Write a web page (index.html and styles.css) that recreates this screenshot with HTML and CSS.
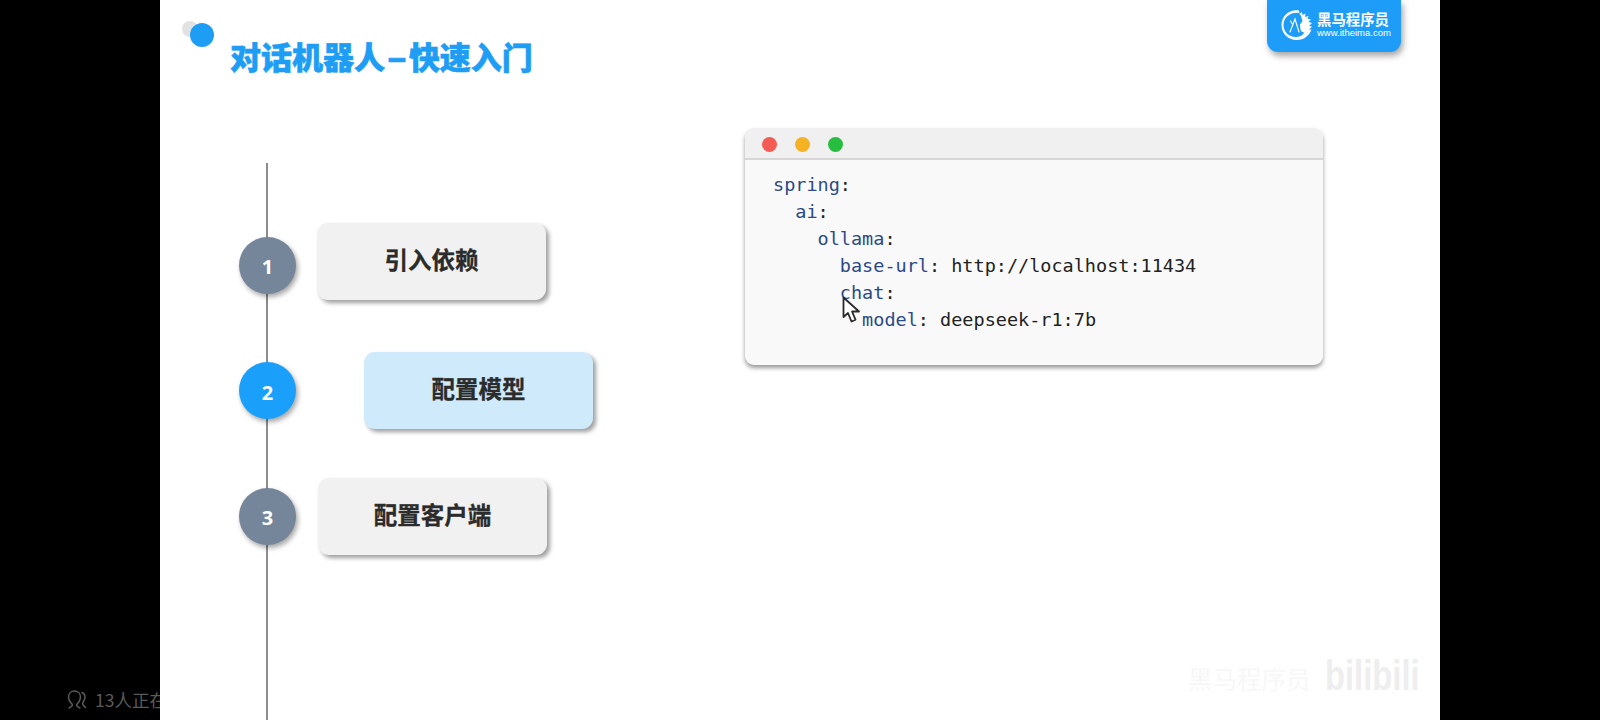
FILE: index.html
```html
<!DOCTYPE html>
<html lang="zh-CN">
<head>
<meta charset="utf-8">
<title>对话机器人-快速入门</title>
<link rel="stylesheet" href="styles.css">
</head>
<body>
<aside class="side side-left">
  <div class="viewers">
    <svg class="viewers-icon" width="22" height="20" viewBox="0 0 22 20" fill="none" stroke="#5a5a5a" stroke-width="1.500" stroke-linecap="round">
      <path d="M3 18c1.500-.8 3-1.500 3.500-3 0-1.200-4-3-4-8C2.500 3.500 5 1 8.500 1s6 2.500 6 6c0 5-4 6.800-4 8 .5 1.500 2 2.200 3.500 3"/>
      <path d="M16 2.500c2 .8 3 2.500 3 4.500 0 3-2 4.500-2.500 6.500 0 1.500 1.500 2.500 3 4"/>
    </svg>
    <span>13人正在看</span>
  </div>
</aside>
<main class="slide">
  <header class="slide-header">
    <svg class="mark" width="34" height="30" viewBox="0 0 34 30">
      <circle cx="8" cy="9" r="8" fill="#e2e2e2"/>
      <circle cx="20" cy="15" r="12" fill="#1e9df5"/>
    </svg>
    <h1 class="title">对话机器人<span class="dash">-</span>快速入门</h1>
  </header>

  <div class="logo">
    <svg class="logo-icon" width="34" height="32" viewBox="0 0 34 32" fill="none">
      <path d="M19 1.500C9 0 1.500 7 1.500 16c0 8.500 6.500 15 15 15 8 0 13-5 15-10.500l-2.500.5 3-3.500-3-.5 3-3-3.500-1 2.500-3-3.500 0 1-3-3.500 1 .5-3.500-3 1.500-.5-3-2.500 2z" fill="#fff"/>
      <path d="M19 4C11 3 3.500 8 3.500 16c0 7 5.500 12 12 12 4 0 7-1.500 9-4.500-2.500 0-3.500-1-4-3l-.5-5 2.500-3.500-1.500-5z" fill="#1e9df8"/>
      <path d="M10 23l5-13 4 13M13 16l-2.500-4" stroke="#fff" stroke-width="1.100" stroke-linecap="round"/>
    </svg>
    <div class="logo-text">
      <span class="logo-name">黑马程序员</span>
      <span class="logo-url">www.itheima.com</span>
    </div>
  </div>

  <div class="content">
    <section class="timeline">
      <div class="step">
        <span class="num">1</span>
        <div class="step-card step-card-first">引入依赖</div>
      </div>
      <div class="step step-active">
        <span class="num">2</span>
        <div class="step-card">配置模型</div>
      </div>
      <div class="step step-last">
        <span class="num">3</span>
        <div class="step-card">配置客户端</div>
      </div>
    </section>

    <section class="window">
      <div class="window-bar">
        <span class="light light-red"></span>
        <span class="light light-amber"></span>
        <span class="light light-green"></span>
      </div>
      <pre class="code"><span class="key">spring</span>:
  <span class="key">ai</span>:
    <span class="key">ollama</span>:
      <span class="key">base-url</span>: http://localhost:11434
      <span class="key">chat</span>:
        <span class="key">model</span>: deepseek-r1:7b</pre>
      <svg class="cursor" width="19" height="28" viewBox="0 0 19 28">
        <path d="M1.500 1.500V21l4.500-4 3.500 8.500 4-1.800L10 15.500h7z" fill="#fff" stroke="#2b2b2b" stroke-width="1.800" stroke-linejoin="round"/>
      </svg>
    </section>
  </div>

  <div class="watermark">
    <span class="wm-name">黑马程序员</span>
    <span class="wm-bili">bilibili</span>
  </div>
</main>
<aside class="side"></aside>
</body>
</html>
```

FILE: styles.css
```css
* { box-sizing: border-box; }

html, body { margin: 0; height: 720px; overflow: hidden; }

body {
  display: flex;
  background: #000;
  font-family: "Noto Sans CJK SC", "Noto Sans", sans-serif;
}

.side { width: 160px; flex: none; overflow: hidden; display: flex; flex-direction: column; justify-content: flex-end; }

.viewers {
  display: flex;
  align-items: center;
  gap: 7px;
  padding: 0 0 8px 66px;
  width: 220px;
  color: #5a5a5a;
  font-size: 17.500px;
  line-height: 24px;
  white-space: nowrap;
}

.viewers-icon { flex: none; }

.slide {
  position: relative;
  width: 1280px;
  height: 720px;
  flex: none;
  background: #fff;
  overflow: hidden;
}

.slide-header {
  display: flex;
  align-items: flex-start;
  height: 128px;
  padding: 20px 0 0 22px;
}

.mark { flex: none; }

.title {
  margin: 13px 0 0 14px;
  font-size: 31px;
  line-height: 46px;
  font-weight: 900;
  color: #1e9df5;
  -webkit-text-stroke: .6px #1e9df5;
  white-space: nowrap;
}

.dash {
  display: inline-block;
  margin: 0 6px;
  transform: scaleX(1.800);
}

.logo {
  position: absolute;
  top: 0;
  left: 1107px;
  width: 134px;
  height: 52px;
  display: flex;
  align-items: center;
  gap: 3px;
  padding: 0 0 2px 13px;
  background: #1e9df8;
  border-radius: 0 0 11px 11px;
  box-shadow: 2px 4px 6px rgba(0, 0, 0, .35);
  color: #fff;
}

.logo-icon { flex: none; }

.logo-text { display: flex; flex-direction: column; margin-top: -3px; }

.logo-name { font-size: 14.400px; line-height: 18px; font-weight: 700; white-space: nowrap; }

.logo-url { font-family: "Liberation Sans", sans-serif; font-size: 9.500px; line-height: 10px; white-space: nowrap; }

.content { display: flex; align-items: flex-start; }

.timeline {
  position: relative;
  flex: none;
  width: 506px;
  height: 557px;
  margin: 35px 0 0 79px;
  padding-top: 39.500px;
  display: grid;
  grid-auto-rows: 125.500px;
  align-content: start;
  justify-items: start;
}

.timeline::before {
  content: "";
  position: absolute;
  top: 0;
  bottom: 0;
  left: 27px;
  width: 2px;
  background: #8c8c8c;
}

.step { display: flex; align-items: center; gap: 21px; height: 100%; position: relative; }

.num {
  flex: none;
  width: 57px;
  height: 57px;
  padding-top: 3px;
  border-radius: 50%;
  display: flex;
  align-items: center;
  justify-content: center;
  background: #75859a;
  box-shadow: 2px 3px 5px rgba(0, 0, 0, .35);
  color: #fff;
  font-family: "Open Sans", sans-serif;
  font-size: 20px;
  font-weight: 700;
}

.step-card {
  width: 229px;
  height: 77px;
  padding-bottom: 5px;
  display: flex;
  align-items: center;
  justify-content: center;
  background: #f1f1f1;
  border-radius: 11px;
  box-shadow: 3px 3px 4px rgba(0, 0, 0, .38);
  color: #2b2b2b;
  font-size: 23.500px;
  font-weight: 700;
  -webkit-text-stroke: .3px #2b2b2b;
}

.step-card-first { margin-bottom: 7px; }

.step-active { gap: 68px; }
.step-active .num { background: #1a9ffb; }
.step-active .step-card { background: #cfeafa; }

.step-last { gap: 22px; }

.window {
  position: relative;
  flex: none;
  width: 578px;
  height: 237px;
  background: #f9f9f9;
  border-radius: 9px;
  box-shadow: 0 3px 4px rgba(0, 0, 0, .4);
  overflow: hidden;
}

.window-bar {
  display: flex;
  align-items: center;
  gap: 18px;
  height: 32px;
  padding: 3px 0 0 17px;
  background: #f0f0f0;
  border-bottom: 2px solid #d6d6d6;
}

.light { width: 15px; height: 15px; border-radius: 50%; }
.light-red { background: #f55b55; }
.light-amber { background: #f5b223; }
.light-green { background: #27bd3f; }

.code {
  margin: 0;
  padding: 12px 0 0 28px;
  font-family: "DejaVu Sans Mono", monospace;
  font-size: 18.500px;
  line-height: 26.900px;
  color: #222;
}

.key { color: #2b4a87; }

.cursor { position: absolute; left: 97px; top: 168px; }

.watermark {
  position: absolute;
  left: 1028px;
  top: 652px;
  display: flex;
  align-items: center;
  gap: 14px;
  pointer-events: none;
}

.wm-name { font-size: 24.500px; line-height: 36px; margin-top: 6px; color: #f7f7f7; white-space: nowrap; }

.wm-bili {
  width: 94px;
  font-family: "Liberation Sans", sans-serif;
  font-size: 42px;
  line-height: 48px;
  font-weight: 700;
  color: #eeeeee;
  transform: scaleX(.78);
  transform-origin: left center;
}
```
